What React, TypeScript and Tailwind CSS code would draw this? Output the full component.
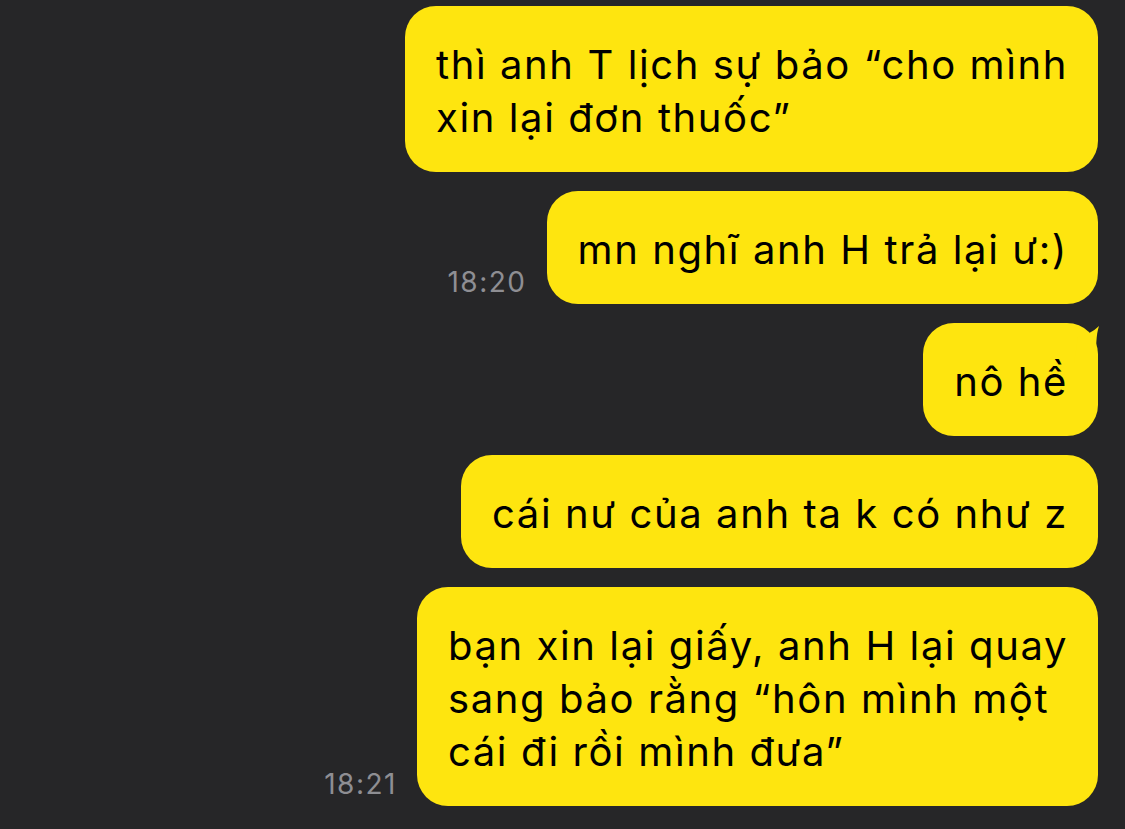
import React from "react";

interface Msg {
  lines: string[];
  time?: string;
  tail?: boolean;
}

const msgs: Msg[] = [
  { lines: ["thì anh T lịch sự bảo “cho mình", "xin lại đơn thuốc”"] },
  { lines: ["mn nghĩ anh H trả lại ư:)"], time: "18:20" },
  { lines: ["nô hề"], tail: true },
  { lines: ["cái nư của anh ta k có như z"] },
  {
    lines: ["bạn xin lại giấy, anh H lại quay", "sang bảo rằng “hôn mình một", "cái đi rồi mình đưa”"],
    time: "18:21",
  },
];

const Bubble = ({ msg }: { msg: Msg }) => (
  <div className="flex items-end justify-end gap-[20px]">
    {msg.time && (
      <span className="mb-[8px] text-[28px] leading-none tracking-[1.5px] text-[#8e8e93]">{msg.time}</span>
    )}
    <div className="relative rounded-[31px] bg-[#fee50f] pl-[31px] pr-[30px] pt-[32px] pb-[28px] text-[40px] leading-[53px] tracking-[1.6px] text-black whitespace-nowrap">
      {msg.tail && (
        <svg className="absolute -right-[4px] top-[-4px]" width="36" height="44" viewBox="0 0 36 44">
          <path d="M12 18 C20 16 27 13 33 7 C30 16 30 28 30 44 L8 44 Z" fill="#fee50f" />
        </svg>
      )}
      {msg.lines.map((l, i) => (
        <div key={i}>{l}</div>
      ))}
    </div>
  </div>
);

export default function App() {
  return (
    <div
      className="h-[829px] w-[1125px] overflow-hidden bg-[#262628] pt-[6px] pr-[27px]"
      style={{ fontFamily: "Inter, 'Noto Sans', sans-serif" }}
    >
      <div className="flex flex-col gap-[19px]">
        {msgs.map((m, i) => (
          <Bubble key={i} msg={m} />
        ))}
      </div>
    </div>
  );
}
